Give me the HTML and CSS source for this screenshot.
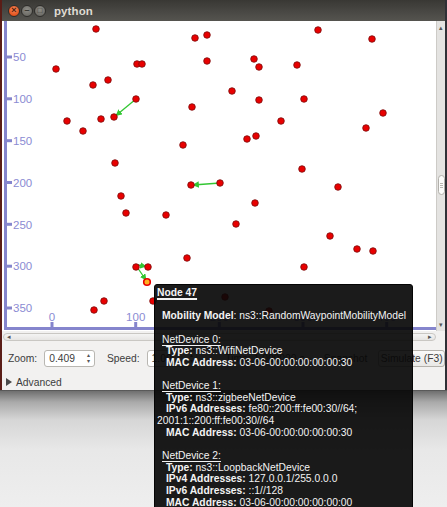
FILE: index.html
```html
<!DOCTYPE html>
<html>
<head>
<meta charset="utf-8">
<title>python</title>
<link rel="stylesheet" href="styles.css">
</head>
<body>
<div class="desk">
  <div class="strip-l"></div>
  <div class="win">
    <div class="titlebar">
      <span class="wbtn close">×</span>
      <span class="wbtn mini">–</span>
      <span class="wbtn maxi">□</span>
      <span class="title">python</span>
    </div>
    <div class="canvas-row">
      <svg class="plot" width="434" height="310" viewBox="2 21 434 310" xmlns="http://www.w3.org/2000/svg">
        <defs>
          <marker id="ah" viewBox="0 0 10 10" refX="9" refY="5" markerWidth="5" markerHeight="5" orient="auto">
            <path d="M0 0 L10 5 L0 10 z" fill="#33c633"/>
          </marker>
        </defs>
        <rect x="2" y="21" width="434" height="310" fill="#ffffff"/>
        <g class="axis">
          <rect x="4" y="21" width="3" height="309"/>
          <rect x="4" y="327" width="432" height="3"/>
          <rect x="7" y="55.5" width="5" height="3"/>
          <rect x="7" y="97.3" width="5" height="3"/>
          <rect x="7" y="139.2" width="5" height="3"/>
          <rect x="7" y="181" width="5" height="3"/>
          <rect x="7" y="222.8" width="5" height="3"/>
          <rect x="7" y="264.7" width="5" height="3"/>
          <rect x="7" y="306.5" width="5" height="3"/>
          <rect x="50.5" y="322" width="3" height="5"/>
          <rect x="134.2" y="322" width="3" height="5"/>
          <rect x="217.8" y="322" width="3" height="5"/>
          <rect x="301.5" y="322" width="3" height="5"/>
          <rect x="385.2" y="322" width="3" height="5"/>
        </g>
        <g class="labels">
          <text x="13" y="61.2">50</text>
          <text x="13" y="103">100</text>
          <text x="13" y="144.9">150</text>
          <text x="13" y="186.7">200</text>
          <text x="13" y="228.5">250</text>
          <text x="13" y="270.4">300</text>
          <text x="13" y="312.2">350</text>
          <text class="mid" x="52" y="320.5">0</text>
          <text class="mid" x="135.7" y="320.5">100</text>
          <text class="mid" x="219.3" y="320.5">200</text>
          <text class="mid" x="303" y="320.5">300</text>
          <text class="mid" x="386.7" y="320.5">400</text>
        </g>
        <g class="links">
          <line x1="136" y1="99" x2="116" y2="115.5" marker-end="url(#ah)"/>
          <line x1="220" y1="183" x2="193" y2="185" marker-end="url(#ah)"/>
          <line x1="137" y1="267" x2="146" y2="280" marker-end="url(#ah)"/>
          <line x1="138" y1="265" x2="146" y2="266.5" marker-end="url(#ah)"/>
        </g>
        <g class="nodes">
          <circle cx="96" cy="29" r="3.3"/>
          <circle cx="56" cy="69" r="3.3"/>
          <circle cx="137" cy="64" r="3.3"/>
          <circle cx="142" cy="64" r="3.3"/>
          <circle cx="93" cy="85" r="3.3"/>
          <circle cx="108" cy="80" r="3.3"/>
          <circle cx="136" cy="99" r="3.3"/>
          <circle cx="114" cy="117" r="3.3"/>
          <circle cx="67" cy="121" r="3.3"/>
          <circle cx="101" cy="119" r="3.3"/>
          <circle cx="83" cy="131" r="3.3"/>
          <circle cx="115" cy="163" r="3.3"/>
          <circle cx="195" cy="38" r="3.3"/>
          <circle cx="207" cy="35" r="3.3"/>
          <circle cx="318" cy="30" r="3.3"/>
          <circle cx="372" cy="39" r="3.3"/>
          <circle cx="207" cy="61" r="3.3"/>
          <circle cx="254" cy="59" r="3.3"/>
          <circle cx="259" cy="67" r="3.3"/>
          <circle cx="297" cy="65" r="3.3"/>
          <circle cx="232" cy="91" r="3.3"/>
          <circle cx="259" cy="100" r="3.3"/>
          <circle cx="304" cy="99" r="3.3"/>
          <circle cx="192" cy="107" r="3.3"/>
          <circle cx="383" cy="113" r="3.3"/>
          <circle cx="281" cy="121" r="3.3"/>
          <circle cx="366" cy="128" r="3.3"/>
          <circle cx="247" cy="139" r="3.3"/>
          <circle cx="256" cy="136" r="3.3"/>
          <circle cx="183" cy="145" r="3.3"/>
          <circle cx="302" cy="169" r="3.3"/>
          <circle cx="191" cy="185" r="3.3"/>
          <circle cx="220" cy="183" r="3.3"/>
          <circle cx="338" cy="187" r="3.3"/>
          <circle cx="255" cy="203" r="3.3"/>
          <circle cx="166" cy="215" r="3.3"/>
          <circle cx="236" cy="224" r="3.3"/>
          <circle cx="330" cy="236" r="3.3"/>
          <circle cx="187" cy="258" r="3.3"/>
          <circle cx="357" cy="249" r="3.3"/>
          <circle cx="373" cy="251" r="3.3"/>
          <circle cx="304" cy="267" r="3.3"/>
          <circle cx="121" cy="196" r="3.3"/>
          <circle cx="126" cy="213" r="3.3"/>
          <circle cx="136" cy="267" r="3.3"/>
          <circle cx="148" cy="267" r="3.3"/>
          <circle cx="104" cy="301" r="3.3"/>
          <circle cx="94" cy="310" r="3.3"/>
          <circle cx="153" cy="301" r="3.3"/>
          <circle cx="225" cy="297" r="3.3"/>
          <circle cx="269" cy="311" r="3.3"/>
          <circle class="sel" cx="147" cy="282" r="3.3"/>
        </g>
      </svg>
      <div class="vscroll">
        <span class="varrow">▴</span>
        <span class="vthumb"><i></i><i></i><i></i></span>
        <span class="varrow bottom">▾</span>
      </div>
    </div>
    <div class="hscroll">
      <div class="htrack"><span class="harrow">◂</span><span class="harrow">▸</span></div>
    </div>
    <div class="controls">
      <span class="lbl">Zoom:</span>
      <span class="spin s1"><span class="val">0.409</span><span class="arrows"><span>▴</span><span>▾</span></span></span>
      <span class="lbl speed">Speed:</span>
      <span class="spin s2"><span class="val">1.00</span><span class="arrows"><span>▴</span><span>▾</span></span></span>
      <span class="lbl time">Time: 1.000000 s</span>
      <span class="lbl snap">Snapshot</span>
      <span class="btn">Simulate (F3)</span>
    </div>
    <div class="advanced">
      <span class="tri"></span><span class="lbl">Advanced</span>
    </div>
  </div>
  <div class="strip-r"></div>
</div>

<div class="tip">
  <div class="ln"><b class="u">Node 47</b></div>
  <div class="ln"></div>
  <div class="ln i1"><b>Mobility Model</b>: ns3::RandomWaypointMobilityModel</div>
  <div class="ln"></div>
  <div class="ln i1"><span class="u">NetDevice 0:</span></div>
  <div class="ln i2"><b>Type:</b> ns3::WifiNetDevice</div>
  <div class="ln i2"><b>MAC Address:</b> 03-06-00:00:00:00:00:30</div>
  <div class="ln"></div>
  <div class="ln i1"><span class="u">NetDevice 1:</span></div>
  <div class="ln i2"><b>Type:</b> ns3::zigbeeNetDevice</div>
  <div class="ln i2"><b>IPv6 Addresses:</b> fe80::200:ff:fe00:30//64;</div>
  <div class="ln">2001:1::200:ff:fe00:30//64</div>
  <div class="ln i2"><b>MAC Address:</b> 03-06-00:00:00:00:00:30</div>
  <div class="ln"></div>
  <div class="ln i1"><span class="u">NetDevice 2:</span></div>
  <div class="ln i2"><b>Type:</b> ns3::LoopbackNetDevice</div>
  <div class="ln i2"><b>IPv4 Addresses:</b> 127.0.0.1/255.0.0.0</div>
  <div class="ln i2"><b>IPv6 Addresses:</b> ::1//128</div>
  <div class="ln i2"><b>MAC Address:</b> 03-06-00:00:00:00:00:00</div>
</div>
</body>
</html>
```
FILE: styles.css
```css
html, body {
  margin: 0;
  padding: 0;
}
body {
  width: 447px;
  height: 507px;
  overflow: hidden;
  position: relative;
  font-family: "Liberation Sans", Arial, sans-serif;
  background: #ececec;
}
.desk {
  display: flex;
  height: 507px;
  align-items: flex-start;
  background: linear-gradient(to bottom, #444 0px, #444 390px, #6f6f6f 391px, #a9a9a9 402px, #d6d6d6 420px, #e8e8e8 450px, #eeeeee 507px);
}
.strip-l {
  width: 2px;
  height: 390px;
  background: #5a1d17;
}
.strip-r {
  width: 2px;
  height: 390px;
  background: #2f3036;
}
.win {
  width: 443px;
  height: 390px;
  display: flex;
  flex-direction: column;
  background: #f2f1f0;
}
.titlebar {
  height: 21px;
  display: flex;
  align-items: center;
  padding-left: 6px;
  gap: 1px;
  background: linear-gradient(to bottom, #393834, #4a4945 60%, #55544f);
}
.wbtn {
  width: 12px;
  height: 12px;
  border-radius: 50%;
  display: flex;
  align-items: center;
  justify-content: center;
  font-size: 9px;
  line-height: 1;
  font-weight: bold;
  color: #3c3b37;
  box-sizing: border-box;
}
.close {
  background: radial-gradient(circle at 50% 35%, #f7895a, #e5541f 70%, #c8430f);
  border: 1px solid #2e2d2a;
  color: #4a2010;
}
.mini, .maxi {
  background: radial-gradient(circle at 50% 35%, #8e8d87, #6e6d68 70%, #5f5e59);
  border: 1px solid #2e2d2a;
  color: #3a3935;
}
.maxi { font-size: 8px; }
.title {
  margin-left: 7px;
  font-weight: bold;
  font-size: 11.5px;
  color: #dfdbd2;
  letter-spacing: 0.1px;
}
.canvas-row {
  display: flex;
  height: 310px;
}
.plot {
  display: block;
}
.axis rect { fill: #8585cd; }
.labels text {
  fill: #8b8bd3;
  font-family: "Liberation Sans", Arial, sans-serif;
  font-size: 11.5px;
}
.labels .mid { text-anchor: middle; }
.links line {
  stroke: #33c633;
  stroke-width: 1.3;
}
.nodes circle {
  fill: #e80000;
  stroke: #7a0d0d;
  stroke-width: 0.8;
}
.nodes .sel {
  fill: #ffb020;
  stroke: #e80000;
  stroke-width: 1.6;
}
.vscroll {
  width: 9px;
  box-sizing: border-box;
  border-left: 1px solid #cdcbc7;
  background: #e4e3e1;
  display: flex;
  flex-direction: column;
  align-items: center;
}
.varrow {
  font-size: 7px;
  line-height: 8px;
  height: 8px;
  color: #555;
  margin-top: 3px;
}
.varrow.bottom {
  margin-top: auto;
  margin-bottom: 2px;
}
.vthumb {
  margin-top: 143px;
  width: 7px;
  height: 20px;
  box-sizing: border-box;
  border: 1px solid #b2b0ab;
  border-radius: 4px;
  background: #fbfbfa;
  display: flex;
  flex-direction: column;
  align-items: center;
  justify-content: center;
  gap: 1px;
}
.vthumb i {
  display: block;
  width: 3px;
  height: 1px;
  background: #b8b6b1;
}
.hscroll {
  height: 11px;
  padding: 2px 9px 1px 1px;
  box-sizing: border-box;
  background: #f2f1f0;
}
.htrack {
  height: 8px;
  box-sizing: border-box;
  border: 1px solid #c9c7c3;
  border-radius: 4px;
  background: linear-gradient(#f4f4f3, #e6e5e3);
  display: flex;
  justify-content: space-between;
  align-items: center;
  padding: 0 3px;
}
.harrow {
  font-size: 7px;
  line-height: 6px;
  color: #555;
}
.controls {
  height: 32px;
  display: flex;
  align-items: center;
  padding-left: 6px;
  font-size: 10.3px;
  color: #3c3c3c;
}
.lbl {
  font-size: 10.3px;
  color: #3c3c3c;
  white-space: nowrap;
}
.spin {
  margin-left: 7px;
  width: 51px;
  height: 17px;
  box-sizing: border-box;
  border: 1px solid #b9b7b2;
  border-radius: 3px;
  background: #ffffff;
  display: flex;
  align-items: center;
  padding-left: 4px;
}
.spin .val {
  flex: 1;
  color: #3c3c3c;
}
.spin .arrows {
  width: 8px;
  display: flex;
  flex-direction: column;
  align-items: center;
  font-size: 6px;
  line-height: 6px;
  color: #555;
  margin-right: 1px;
}
.speed { margin-left: 12px; }
.time {
  margin-left: 28px;
  width: 95px;
}
.snap {
  margin-left: 4px;
}
.btn {
  margin-left: 11px;
  width: 67px;
  height: 17px;
  box-sizing: border-box;
  border: 1px solid #b4b1ab;
  border-radius: 3px;
  background: linear-gradient(#fafaf9, #e9e8e6);
  display: flex;
  align-items: center;
  justify-content: center;
  font-size: 10.3px;
  color: #3c3c3c;
  white-space: nowrap;
}
.advanced {
  height: 16px;
  display: flex;
  align-items: center;
  padding-left: 4px;
}
.tri {
  width: 0;
  height: 0;
  border-top: 4px solid transparent;
  border-bottom: 4px solid transparent;
  border-left: 6px solid #4a4a4a;
  margin-right: 4px;
}
.tip {
  position: absolute;
  left: 154px;
  top: 284px;
  width: 259px;
  height: 240px;
  box-sizing: border-box;
  border: 1px solid #050505;
  border-radius: 3px;
  background: rgba(8, 8, 8, 0.92);
  padding: 2px 0 0 2px;
  color: #f3f3f3;
  font-size: 10.3px;
  line-height: 11.65px;
  white-space: nowrap;
}
.ln {
  height: 11.65px;
}
.ln b { font-weight: bold; }
.u {
  text-decoration: underline;
  text-underline-offset: 1.5px;
}
b.u {
  text-decoration-thickness: 1.5px;
}
.i1 { padding-left: 5px; }
.i2 { padding-left: 9px; }
```
